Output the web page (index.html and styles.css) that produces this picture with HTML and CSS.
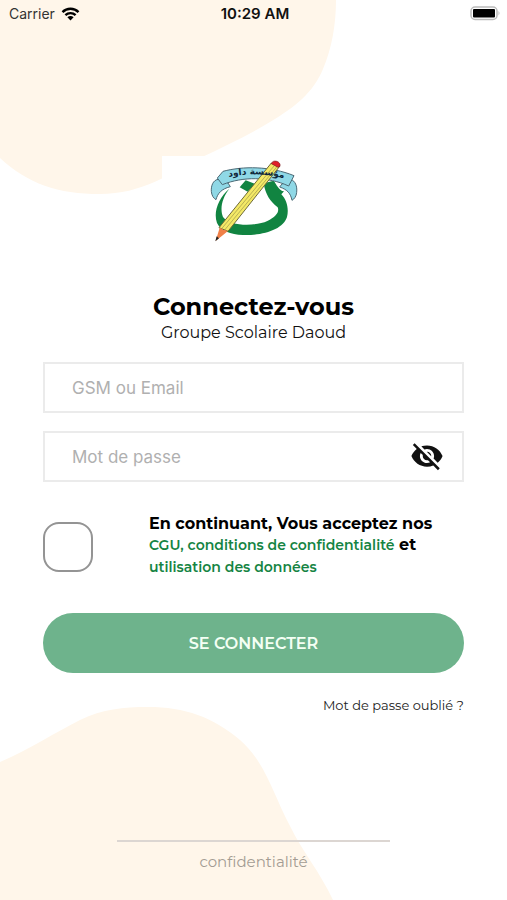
FILE: index.html
```html
<!DOCTYPE html>
<html lang="fr">
<head>
<meta charset="utf-8">
<meta name="viewport" content="width=device-width, initial-scale=1">
<title>Connectez-vous</title>
<link rel="stylesheet" href="styles.css">
</head>
<body>
<div class="screen">
  <svg class="blob blob-top" viewBox="0 0 340 196" aria-hidden="true">
    <path d="M0 0H336C336 24 332 48 323 69C313 93 295 107 270 122C247 136 225 146 200 158C170 174 142 194 100 194C58 194 28 184 0 158Z"/>
  </svg>
  <svg class="blob blob-bottom" viewBox="0 0 340 194" aria-hidden="true">
    <path d="M0 56C32 42 56 26 80 14C103 3 123 1 148 1C185 1 213 11 240 34C266 57 273 88 290 120C302 145 320 166 333 194H0Z"/>
  </svg>

  <header class="status">
    <div class="carrier">
      <span>Carrier</span>
      <svg class="wifi" viewBox="0 0 18 14" aria-hidden="true">
        <path d="M1 5.1C5.4 0.7 12.600 0.700 17 5.100" /><path d="M3.900 8.100C6.700 5.400 11.300 5.400 14.100 8.100"/><path class="dot" d="M5.900 10.200C7.600 8.600 10.400 8.600 12.100 10.200L9 13.500Z"/>
      </svg>
    </div>
    <time class="clock">10:29 AM</time>
    <svg class="battery" viewBox="0 0 31 15" aria-hidden="true">
      <rect class="case" x="1" y="1" width="26" height="12.500" rx="4"/>
      <rect x="3" y="3" width="22" height="8.500" rx="1"/>
      <path class="cap" d="M28.500 5Q30.500 7.200 28.500 9.500Z"/>
    </svg>
  </header>

  <main class="content">
    <svg class="logo" viewBox="6 18 552 276" role="img" aria-label="Groupe Scolaire Daoud">
      <path class="green" d="M208 116C186 144 179 176 189 201C208 229 285 230 322 213C348 201 359 186 353 172C330 154 316 133 311 100L341 92C350 104 357 122 372 124L364 133C381 150 387 178 381 201C370 238 310 257 249 255C211 254 182 242 171 219C159 185 176 143 208 116Z"/>
      <path class="green" d="M257 91L286 102L263 125L239 112Z"/>
      <path class="ribbon" d="M174 88C159 91 153 107 154 124C155 137 161 145 168 149C173 130 184 117 211 110L204 99Z"/>
      <path class="ribbon" d="M392 88C406 93 412 108 410 127C409 139 403 147 396 151C392 131 383 119 359 111L366 102Z"/>
      <path class="ribbon" d="M189 64C249 48 331 48 402 77L386 108C325 80 250 79 187 104L172 84Z"/>
      <path class="body" d="M334 39L359 49L204 244L177 233Z"/>
      <path class="stripe" d="M342 48L185 236M350 51L194 240"/>
      <path class="eraser" d="M334 41Q338 31 350 34Q362 38 360 49L354 52Z"/>
      <path class="wood" d="M179 233Q187 236 190 240Q197 239 203 244L167 273Z"/>
      <path class="lead" d="M170 259L177 265L166 274Z"/>
      <path id="arc" class="guide" d="M192 84Q290 60 386 89"/>
      <text class="motto"><textPath href="#arc" startOffset="50%">مؤسسة داود</textPath></text>
    </svg>

    <h1 class="title">Connectez-vous</h1>
    <p class="subtitle">Groupe Scolaire Daoud</p>

    <form class="form">
      <input class="field" type="text" placeholder="GSM ou Email" aria-label="GSM ou Email">
      <div class="password">
        <input class="field" type="password" placeholder="Mot de passe" aria-label="Mot de passe">
        <button class="reveal" type="button" aria-label="Afficher le mot de passe">
          <svg viewBox="0 0 24 24" aria-hidden="true"><path d="M12 7c2.760 0 5 2.240 5 5 0 .65-.13 1.260-.36 1.830l2.920 2.920c1.510-1.260 2.700-2.890 3.430-4.750-1.730-4.390-6-7.500-11-7.500-1.400 0-2.740.25-3.980.7l2.160 2.160C10.740 7.130 11.350 7 12 7zM2 4.270l2.280 2.280.46.46C3.080 8.300 1.780 10.020 1 12c1.730 4.390 6 7.500 11 7.500 1.550 0 3.030-.3 4.380-.84l.42.42L19.730 22 21 20.730 3.270 3 2 4.270zM7.530 9.800l1.550 1.550c-.05.21-.08.43-.08.65 0 1.660 1.340 3 3 3 .22 0 .44-.03.65-.08l1.550 1.550c-.67.33-1.410.53-2.200.53-2.760 0-5-2.240-5-5 0-.79.2-1.530.53-2.200zm4.310-.78l3.150 3.150.02-.16c0-1.660-1.340-3-3-3l-.17.01z"/></svg>
        </button>
      </div>
      <div class="consent">
        <input class="check" id="consent" type="checkbox">
        <label class="terms" for="consent">En continuant, Vous acceptez nos <br><a href="#cgu">CGU, conditions de confidentialité</a> et <br><a href="#donnees">utilisation des données</a></label>
      </div>
      <button class="submit" type="submit">SE CONNECTER</button>
      <a class="forgot" href="#oubli">Mot de passe oublié ?</a>
    </form>
  </main>

  <footer class="footer"><a href="#confidentialite">confidentialité</a></footer>
</div>
</body>
</html>
```
FILE: styles.css
```css
* { box-sizing: border-box; }

body {
  margin: 0;
  background: #fff;
  color: #111;
  font-family: Montserrat, Inter, "Liberation Sans", sans-serif;
}

a { color: inherit; text-decoration: none; }

.screen {
  position: relative;
  display: flex;
  flex-direction: column;
  min-height: 100vh;
  overflow: hidden;
}

.blob { position: absolute; left: 0; width: 340px; fill: #fff6ea; }
.blob-top { top: 0; }
.blob-bottom { bottom: 0; }

.status {
  position: relative;
  display: grid;
  grid-template-columns: 1fr auto 1fr;
  align-items: center;
  height: 27px;
  padding: 0 6px 0 9px;
  font-family: Inter, sans-serif;
  font-size: 14px;
}
.carrier { display: flex; align-items: center; gap: 6px; color: #333; }
.wifi { width: 19px; height: 14px; fill: none; stroke: #000; stroke-width: 2.400; }
.wifi .dot { fill: #000; stroke: none; }
.clock { font-size: 15px; font-weight: 600; color: #111; }
.battery { width: 31px; height: 15px; justify-self: end; }
.battery .case { fill: #fff; stroke: #bbb; stroke-width: 1.500; }
.battery .cap { fill: #bbb; }

.content {
  position: relative;
  display: flex;
  flex-direction: column;
  align-items: center;
  padding: 129px 43px 0;
}

.logo { width: 184px; height: 92px; background: #fff; }
.green { fill: #118441; }
.ribbon { fill: #8fd8e6; stroke: #4c6a76; stroke-width: 3; }
.body { fill: #f4e967; stroke: #6d6938; stroke-width: 3; }
.stripe { fill: none; stroke: #9a944a; stroke-width: 2; }
.eraser { fill: #e0202a; stroke: #7a1a1c; stroke-width: 2; }
.wood { fill: #f08048; }
.lead { fill: #222; }
.guide { fill: none; }
.motto {
  font-family: "DejaVu Sans", sans-serif;
  font-size: 27px;
  font-weight: 700;
  fill: #10283c;
  text-anchor: middle;
}

.title { margin: 43px 0 0; font-size: 24px; line-height: 32px; font-weight: 700; color: #000; }
.subtitle { margin: 0; font-size: 16px; line-height: 20px; }

.form {
  display: flex;
  flex-direction: column;
  align-self: stretch;
  padding-top: 19px;
}

.field {
  width: 100%;
  height: 51px;
  padding: 0 72px 0 27px;
  border: 2px solid #ebebeb;
  border-radius: 0;
  background: #fff;
  color: #111;
  font-family: Inter, sans-serif;
  font-size: 17px;
}
.field::placeholder { color: #b0b0b0; opacity: 1; }

.password { position: relative; margin-top: 18px; }
.reveal {
  position: absolute;
  top: 8px;
  right: 20px;
  width: 34px;
  height: 34px;
  padding: 0;
  border: 0;
  background: none;
}
.reveal svg { display: block; fill: #111; }

.consent { display: flex; align-items: center; gap: 56px; margin-top: 31px; }
.check {
  flex: none;
  appearance: none;
  width: 50px;
  height: 50px;
  margin: 3px 0 0;
  border: 2px solid #949494;
  border-radius: 16px;
  background: #fff;
}
.terms { font-size: 16px; line-height: 21px; font-weight: 700; color: #000; }
.terms a { font-size: 14px; font-weight: 600; color: #158443; }

.submit {
  height: 60px;
  margin-top: 35px;
  border: 0;
  border-radius: 30px;
  background: #6eb38c;
  color: #f4fff4;
  font: inherit;
  font-size: 16px;
  font-weight: 600;
}

.forgot { align-self: flex-end; margin-top: 22px; font-size: 13px; line-height: 20px; color: #222; }

.footer {
  position: relative;
  width: 54%;
  margin: auto auto 0;
  padding: 10px 0 28px;
  border-top: 2px solid #dcd6d2;
  text-align: center;
  font-size: 15px;
  line-height: 20px;
  color: #a39c93;
}
```
